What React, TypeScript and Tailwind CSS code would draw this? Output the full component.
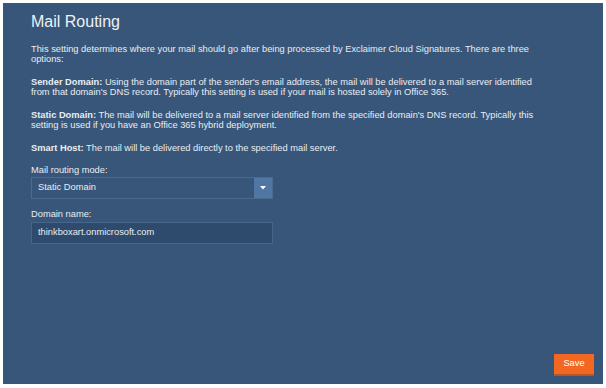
export default function App() {
  return (
    <div className="w-[606px] h-[388px] bg-white pt-[3px] pl-[3px] pr-[3px] pb-[4px]" style={{ fontFamily: '"Liberation Sans", Arial, sans-serif' }}>
      <div className="h-full bg-[#38567a] text-[#e9edf2] flex flex-col pl-[28px] pr-[9px] pt-[8px] pb-[8px]">
        <h1 className="text-[16px] leading-[22px] text-[#eef1f5]">Mail Routing</h1>
        <div className="mt-[11px] w-[512px] text-[9.3px] leading-[10px] flex flex-col gap-[13px]">
          <p>This setting determines where your mail should go after being processed by Exclaimer Cloud Signatures. There are three options:</p>
          <p><span className="font-bold">Sender Domain:</span> Using the domain part of the sender's email address, the mail will be delivered to a mail server identified from that domain's DNS record. Typically this setting is used if your mail is hosted solely in Office 365.</p>
          <p><span className="font-bold">Static Domain:</span> The mail will be delivered to a mail server identified from the specified domain's DNS record. Typically this setting is used if you have an Office 365 hybrid deployment.</p>
          <p><span className="font-bold">Smart Host:</span> The mail will be delivered directly to the specified mail server.</p>
        </div>
        <div className="mt-[12px] text-[9.3px] leading-[11px]">Mail routing mode:</div>
        <div className="mt-[1px] w-[242px] h-[22px] flex border border-[#4a6a90] bg-[#385679]">
          <div className="flex-1 flex items-center pl-[6px] text-[9.3px]">Static Domain</div>
          <div className="w-[18px] h-full bg-[#5077a3] flex items-center justify-center">
            <svg width="6" height="4" viewBox="0 0 6 4"><path d="M0 0H6L3 3.5Z" fill="#ffffff" /></svg>
          </div>
        </div>
        <div className="mt-[10px] text-[9.3px] leading-[11px]">Domain name:</div>
        <div className="mt-[2px] w-[242px] h-[22px] flex items-center pl-[6px] text-[9.3px] bg-[#2e4a6c] border border-[#47668b]">thinkboxart.onmicrosoft.com</div>
        <div className="mt-auto flex justify-end">
          <button className="w-[40px] h-[22px] bg-[#f26722] text-white text-[9.3px] border-b-[2px] border-[#b9551e]">Save</button>
        </div>
      </div>
    </div>
  );
}
